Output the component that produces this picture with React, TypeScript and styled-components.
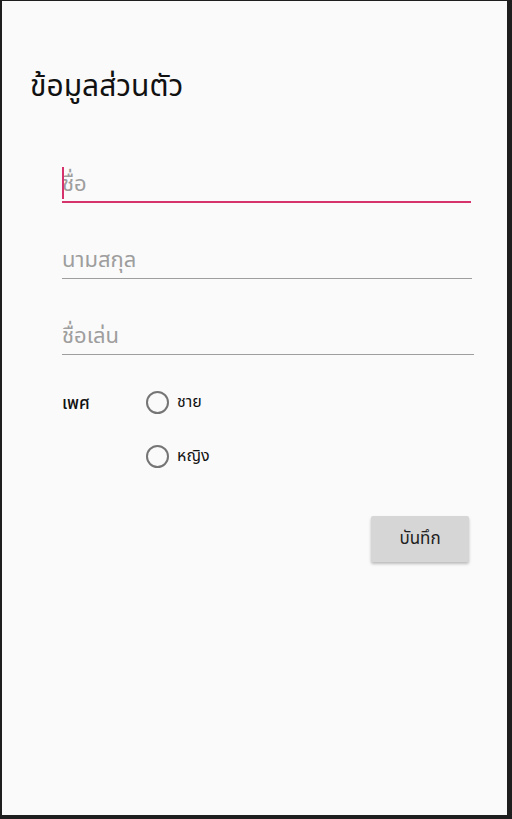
import React, { useState } from "react";
import styled, { createGlobalStyle } from "styled-components";

const GlobalStyle = createGlobalStyle`
  html, body {
    margin: 0;
    padding: 0;
    background: #222222;
  }
  body {
    font-family: "Noto Sans Thai", "Noto Sans", "DejaVu Sans", sans-serif;
  }
`;

const Frame = styled.div`
  width: 512px;
  height: 819px;
  box-sizing: border-box;
  border-style: solid;
  border-color: #1e1e1e;
  border-width: 1px 5px 4px 2px;
  background: #fafafa;
  overflow: hidden;
`;

const Screen = styled.div`
  display: flex;
  flex-direction: column;
  padding: 64px 0 0 28px;
`;

const Title = styled.div`
  font-size: 30px;
  color: #111111;
  line-height: 44px;
`;

const Form = styled.form`
  display: flex;
  flex-direction: column;
  padding: 58px 0 0 32px;
  width: 409px;
`;

const Field = styled.div<{ $focused?: boolean; $extra?: number }>`
  display: flex;
  align-items: center;
  height: 36px;
  margin-bottom: 40px;
  margin-right: ${(p) => -(p.$extra ?? 0)}px;
  border-bottom: ${(p) => (p.$focused ? "2px solid #d6336c" : "1px solid #9e9e9e")};
  box-sizing: border-box;
  position: relative;
`;

const Input = styled.input`
  flex: 1;
  border: none;
  outline: none;
  background: transparent;
  padding: 0;
  font-family: inherit;
  font-size: 22px;
  color: #212121;
  caret-color: #d6336c;
  &::placeholder {
    color: #9e9e9e;
  }
`;

const Cursor = styled.span`
  position: absolute;
  left: 0;
  top: 0;
  width: 2px;
  height: 32px;
  background: #d6336c;
`;

const GenderRow = styled.div`
  display: flex;
  align-items: flex-start;
  margin-top: -5px;
`;

const GenderLabel = styled.div`
  width: 84px;
  font-size: 17px;
  font-weight: 500;
  color: #111111;
  line-height: 26px;
  padding-top: 1px;
`;

const Options = styled.div`
  display: flex;
  flex-direction: column;
  gap: 30px;
`;

const Option = styled.label`
  display: flex;
  align-items: center;
  gap: 8px;
  font-size: 16px;
  color: #111111;
  cursor: pointer;
`;

const Circle = styled.span<{ $checked: boolean }>`
  width: 23px;
  height: 23px;
  border-radius: 50%;
  border: 2px solid ${(p) => (p.$checked ? "#d6336c" : "#757575")};
  box-sizing: border-box;
  display: flex;
  align-items: center;
  justify-content: center;
  &::after {
    content: "";
    width: 11px;
    height: 11px;
    border-radius: 50%;
    background: #d6336c;
    display: ${(p) => (p.$checked ? "block" : "none")};
  }
`;

const Actions = styled.div`
  display: flex;
  justify-content: flex-end;
  padding: 48px 2px 0 0;
`;

const SaveBtn = styled.button`
  width: 98px;
  height: 46px;
  border: none;
  border-radius: 2px;
  background: #d6d6d6;
  box-shadow: 0 2px 3px rgba(0, 0, 0, 0.25);
  font-family: inherit;
  font-size: 17px;
  color: #212121;
  cursor: pointer;
`;

const App = () => {
  const [gender, setGender] = useState("");

  return (
    <>
      <GlobalStyle />
      <Frame>
        <Screen>
          <Title>ข้อมูลส่วนตัว</Title>
          <Form onSubmit={(e) => e.preventDefault()}>
            <Field $focused>
              <Cursor />
              <Input placeholder="ชื่อ" />
            </Field>
            <Field $extra={1}>
              <Input placeholder="นามสกุล" />
            </Field>
            <Field $extra={3}>
              <Input placeholder="ชื่อเล่น" />
            </Field>
            <GenderRow>
              <GenderLabel>เพศ</GenderLabel>
              <Options>
                <Option onClick={() => setGender("m")}>
                  <Circle $checked={gender === "m"} />
                  ชาย
                </Option>
                <Option onClick={() => setGender("f")}>
                  <Circle $checked={gender === "f"} />
                  หญิง
                </Option>
              </Options>
            </GenderRow>
            <Actions>
              <SaveBtn type="submit">บันทึก</SaveBtn>
            </Actions>
          </Form>
        </Screen>
      </Frame>
    </>
  );
};

export default App;
